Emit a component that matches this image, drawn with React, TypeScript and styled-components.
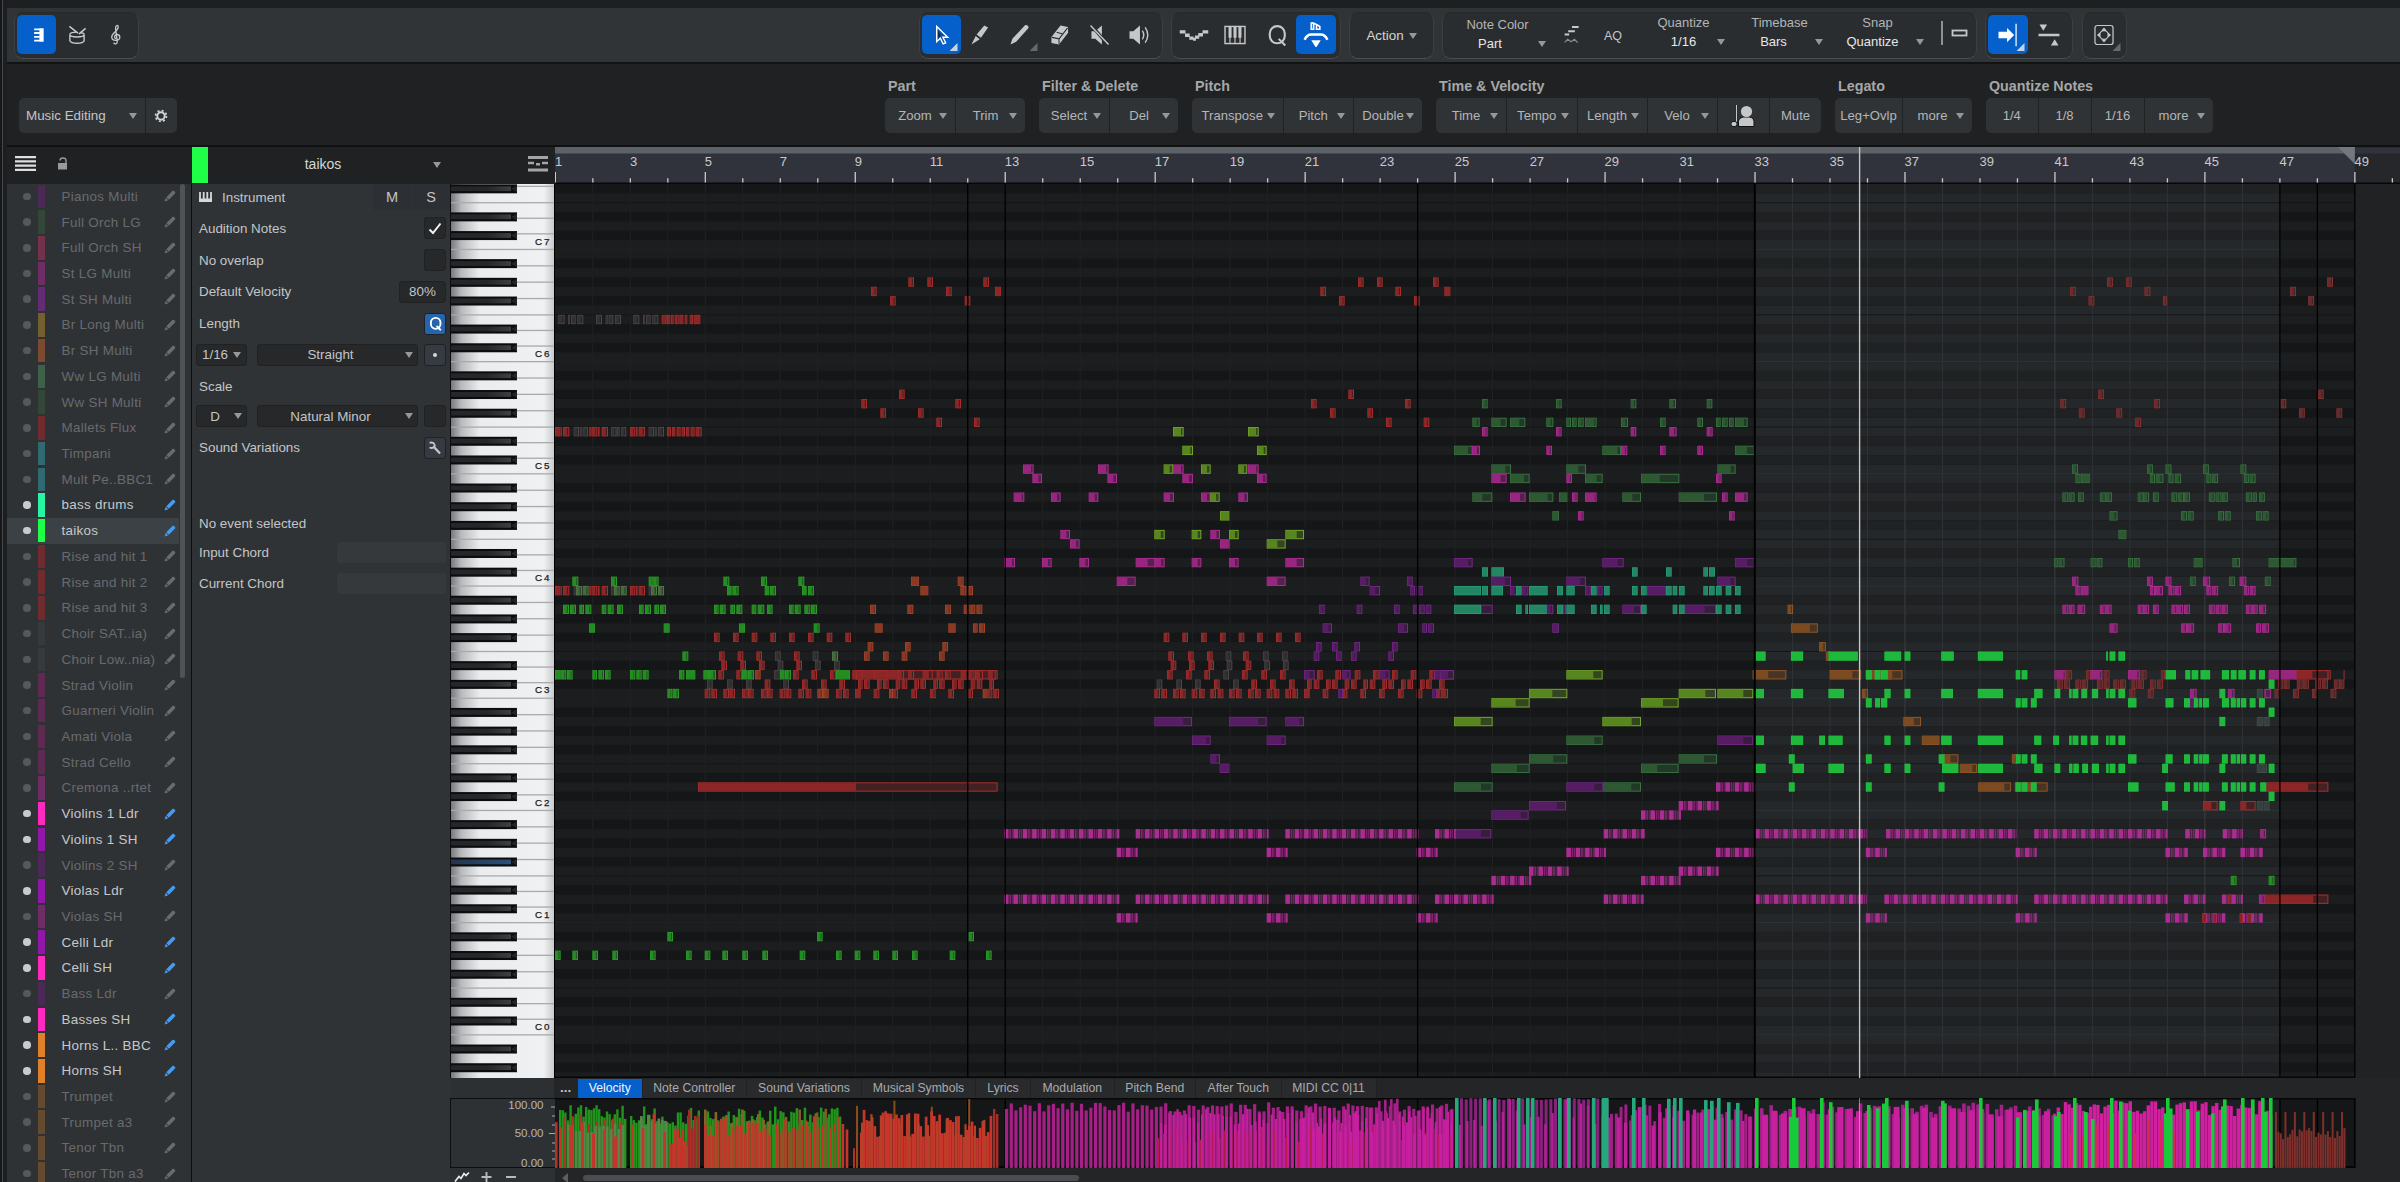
import React from 'react'
import styled, { createGlobalStyle } from 'styled-components'

const BAR = 37.49
const ROW = 9.35
const ROLL_X = 555
const ROLL_TOP = 184
const ROLL_W = 1845
const ROLL_H = 894

type Track = [name: string, color: string, active?: boolean]

const TRACKS: Track[] = [
  ['Pianos Multi', '#4b2856'],
  ['Full Orch LG', '#344638'],
  ['Full Orch SH', '#74314a'],
  ['St LG Multi', '#6f2d65'],
  ['St SH Multi', '#642c75'],
  ['Br Long Multi', '#735f2f'],
  ['Br SH Multi', '#7c4a31'],
  ['Ww LG Multi', '#3f614c'],
  ['Ww SH Multi', '#344638'],
  ['Mallets Flux', '#6f2c2e'],
  ['Timpani', '#2f6a70'],
  ['Mult Pe..BBC1', '#2f6a70'],
  ['bass drums', '#27f5a5', true],
  ['taikos', '#1fff47', true],
  ['Rise and hit 1', '#6f2c2e'],
  ['Rise and hit 2', '#6f2c2e'],
  ['Rise and hit 3', '#6f2c2e'],
  ['Choir SAT..ia)', '#38393b'],
  ['Choir Low..nia)', '#38393b'],
  ['Strad Violin', '#5d2a52'],
  ['Guarneri Violin', '#5d2a52'],
  ['Amati Viola', '#5d2a52'],
  ['Strad Cello', '#5d2a52'],
  ['Cremona ..rtet', '#6f2d65'],
  ['Violins 1 Ldr', '#ff28c0', true],
  ['Violins 1 SH', '#9316ab', true],
  ['Violins 2 SH', '#4b2856'],
  ['Violas Ldr', '#9316ab', true],
  ['Violas SH', '#6f2d65'],
  ['Celli Ldr', '#9316ab', true],
  ['Celli SH', '#ff28c0', true],
  ['Bass Ldr', '#4b2856'],
  ['Basses SH', '#ff28c0', true],
  ['Horns L.. BBC', '#e08028', true],
  ['Horns SH', '#e08028', true],
  ['Trumpet', '#654a2f'],
  ['Trumpet a3', '#654a2f'],
  ['Tenor Tbn', '#654a2f'],
  ['Tenor Tbn a3', '#654a2f'],
]

// fill, border, tail
const NOTE_COLORS: Record<string, [string, string, string]> = {
  green: ['#248d21', '#2c9a2a', '#1e5a1e'],
  moss: ['#45683e', '#4f7a48', '#303f2c'],
  red: ['#8c2627', '#a82e2e', '#432122'],
  dred: ['#6b2b2c', '#853234', '#3d2425'],
  grey: ['#353234', '#4c474a', '#262526'],
  slate: ['#37423f', '#44504c', '#303a38'],
  orange: ['#8b3925', '#a0452a', '#6b2f20'],
  mag: ['#98267f', '#aa2e91', '#57214f'],
  olive: ['#57861f', '#75a82a', '#34461f'],
  wood: ['#2d5832', '#387341', '#233829'],
  purple: ['#561d64', '#762888', '#391c40'],
  teal: ['#238663', '#27a07a', '#238663'],
  lime: ['#1fb83c', '#20c33f', '#1fb83c'],
  brown: ['#7d4b22', '#925828', '#4a3423'],
}

// "x" default note, "x:w" / "x:w:body" explicit length, "a~b" galloping run
type Lane = [pitch: number, color: string, notes: string]

interface Part {
  origin: number
  scale: number
  length: number
  lanes: Lane[]
}

const PARTS: Part[] = [
  {
    origin: 540,
    scale: 3,
    length: 17,
    lanes: [
      [80, 'red', '1105 1162 1330'],
      [79, 'red', '993 1218 1365:18:18'],
      [78, 'red', '1050 1274'],
      [76, 'grey', '55:19 84:6 93:14 112:18 168:18 197:6 206:14 225:18 280:18 309:6 318:14 337:18'],
      [76, 'red', '365:6 373:7 381:10 393:8 404:12 418:12 434:8 449:10 461:20:18'],
      [68, 'red', '1077'],
      [67, 'red', '964 1246'],
      [66, 'red', '1021 1134'],
      [65, 'red', '1189 1302'],
      [64, 'grey', '101:16 119:8 130:14 213:17 231:8 243:16 326:16 344:6 354:18'],
      [64, 'red', '45:16:14 62:4 69:19 148:6 155:17 174:5 185:19 270:16 288:5 296:19 381:12 396:10 410:12 425:10 438:10 452:12 467:18'],
      [48, 'green', '97:18 213:18 326:14 340:16 550:18 663:18 775:18'],
      [48, 'orange', '1113:24:24 1253:18'],
      [47, 'grey', '101:16 213:17 326:16'],
      [47, 'red', '45:16:14 62:4 69:19 148:6 155:17 174:5 185:19 270:16 288:5 296:19'],
      [47, 'moss', '108:18 128:18 222:17 242:18 333:18 354:18'],
      [47, 'green', '561:14:14 577:19 674:14:14 690:18 786:14:14 804:18'],
      [47, 'orange', '1141:24:24 1261:18 1281:18'],
      [45, 'green', '69:18 90:18 118:14 136:18 185:14 203:18 231:18 297:14 315:18 343:14 360:18 522:14 539:18 571:14 589:18 635:14 653:20 681:17 747:14 764:18 793:18 813:18'],
      [45, 'orange', '990:18 1102:18 1215:18 1271:14 1288:18 1309:18'],
      [43, 'green', '147:18:18 371:18:18 597:18:18 821:18'],
      [43, 'orange', '1004:24:24 1225:22:20 1299:14 1317:18'],
      [42, 'red', '522 579 635 691 747 804 860 916'],
      [41, 'orange', '983 1095 1207'],
      [40, 'green', '427:18'],
      [40, 'moss', '876:18'],
      [40, 'red', '537 593 649 762'],
      [40, 'grey', '705 818'],
      [40, 'orange', '972 1029 1085 1197'],
      [39, 'red', '544 601 657 769'],
      [39, 'grey', '713 825 882'],
      [38, 'grey', '702'],
      [38, 'red', '535 589 759 814 870:18 937:436:150'],
      [38, 'orange', '645'],
      [38, 'green', '45:17:17 62:17 81:17 157:14 175:17 195:17 270:16 289:16 308:18 417:16 438:28:27 490:17:17 507:21 606:17:17 624:18 720:14:14 735:18 888:42:40'],
      [38, 'red', '948:20:20 1002:40:40 1075:17 1105:17 1148:30 1190:18 1215:17 1262:26 1288:15 1305:24 1345:22'],
      [37, 'grey', '501 561 618 730'],
      [37, 'red', '674 786 843 898 954:14 972 1011:14 1029 1067:14 1085 1123:14 1141 1180:14 1197 1236:14 1254 1292:14 1310 1348:14'],
      [36, 'green', '382:15 398:19'],
      [36, 'red', '494 514 550 568 606 624 663 681 719 737 775 797 888 909 945:17:17 1001 1057 1114 1170 1225 1282 1340 1360'],
      [36, 'orange', '832 849 1047:12 1328:12'],
      [26, 'red', '474:899:474'],
      [10, 'green', '382 831 1285'],
      [8, 'green', '45 97 157 217 330 438 494 547 607 667 779 888 944 1000 1057 1116 1229 1338'],
    ],
  },
  {
    origin: 1000,
    scale: 3,
    length: 17,
    lanes: [
      [80, 'red', '1074 1131 1299'],
      [79, 'red', '961 1186 1333:18:18'],
      [78, 'red', '1017 1242'],
      [68, 'red', '1045'],
      [67, 'red', '933 1215'],
      [66, 'red', '990 1102'],
      [65, 'red', '1158 1271'],
      [64, 'olive', '519:32:24 744:32:24'],
      [62, 'olive', '547:32:24 771:29:20'],
      [60, 'olive', '491:29 603:29 715:27'],
      [60, 'mag', '69:32:24 294:32:24 519:32:24 744:32:24'],
      [59, 'mag', '97:29 322:29 547:32 771:29'],
      [57, 'mag', '41:32:24 153:29 266:29 491:31 603:29 715:29'],
      [57, 'olive', '631:28'],
      [55, 'olive', '660:28:26'],
      [53, 'olive', '463:31 575:29 687:29 856:56:34'],
      [53, 'mag', '181:29 631:29'],
      [52, 'mag', '210:29 660:29:26'],
      [52, 'olive', '800:57:32'],
      [50, 'mag', '12:33:24 126:29 238:29 407:60:36 463:31:20 575:29 687:29 856:56:34'],
      [48, 'mag', '350:57:32 800:57:32'],
      [48, 'purple', '1081:28 1221'],
      [47, 'purple', '1109:31:17 1231:14 1250:18'],
      [45, 'purple', '957 1070 1182 1239:14 1257 1277'],
      [43, 'purple', '968:28 1194:30 1267:14 1284:18'],
      [42, 'red', '491 547 603 660 716 771 828 885'],
      [41, 'purple', '948 996 1063 1176'],
      [40, 'red', '505 564 621 729'],
      [40, 'grey', '677 789 846'],
      [40, 'purple', '941 1008 1053 1165'],
      [39, 'red', '512 567 625 737'],
      [39, 'grey', '680 793 849'],
      [38, 'red', '501 558 613 726 784 840 951 1006 1064 1119 1176 1232 1288'],
      [38, 'grey', '670'],
      [38, 'purple', '912:32:17 1027:25:15 1137:32:20 1303:59:42'],
      [37, 'grey', '470 529 585 699'],
      [37, 'red', '642 754 810 867 921:14 941 978:14 996 1034:14 1053 1090:14 1109 1147:14 1165 1203:14 1222 1260:14 1278 1317'],
      [36, 'red', '463 484 519 540 575 597 631 653 687 708 744 765 800 821 856 877 912:17:17 968 1025 1081 1137 1194 1250 1310 1327'],
      [36, 'purple', '1015:14 1297:14'],
      [33, 'purple', '463:113:87 687:113:87 856:56:42'],
      [31, 'purple', '576:56:43 800:57:44'],
      [29, 'purple', '631:29'],
      [28, 'purple', '659:29:27'],
      [21, 'mag', '12~358 407~806 856~1256 1305~1362'],
      [19, 'mag', '350~413 800~863 1250~1313'],
      [14, 'mag', '12~358 407~806 856~1256 1305~1362'],
      [12, 'mag', '350~413 800~863 1250~1313'],
    ],
  },
  {
    origin: 1440,
    scale: 3,
    length: 17,
    lanes: [
      [67, 'wood', '126 348 572 688:20 800'],
      [65, 'wood', '97:22 154:46:28 210:46:28 319:21 379:14 396:14 414 435:35:28 543:21 660 772 828:14 846 867:14 885:38:27'],
      [64, 'mag', '126 348 572 688:22 800:18'],
      [62, 'wood', '42:56:42 487:56:46 885:59:36'],
      [62, 'mag', '96:24 319 543:19 660 772'],
      [60, 'wood', '154:59:42 379:59:36 832:55:40'],
      [59, 'mag', '154:46:28 379 828'],
      [59, 'wood', '210:59:42 435:53:35 603:115:56'],
      [57, 'wood', '97:60:30 267:73:56 357:25:23 547:56:30 716:115:76'],
      [57, 'mag', '210:47:30 396 435:35:29 846 885:38:27'],
      [55, 'wood', '337:20:20'],
      [55, 'mag', '414 867'],
      [50, 'purple', '42:56:42 487:64:46 885:59:36'],
      [49, 'teal', '126:18 154:38 576 678 790:14 807:18'],
      [48, 'purple', '154:59:42 379:59:42 832:55:40'],
      [47, 'purple', '210:22 247:18 435 471 621:57:55'],
      [47, 'teal', '42:81 126:18 154:35 228 267:56 351:18 379:25 453 492 576 603 678 698:14 717 790:14 807 828 857 885'],
      [45, 'purple', '123:35:2 319:21 369:9 547:56:35 734:94:60'],
      [45, 'teal', '42:81 228 256:8 267:53 351:18 379:25 453 480:8 492 603 698:14 717 828 857 885'],
      [43, 'purple', '337:20:20'],
      [38, 'olive', '379:109:81'],
      [38, 'purple', '0:42:24'],
      [36, 'olive', '267:115:70 716:112:80 832:108:78'],
      [35, 'olive', '154:115:73 603:113:66'],
      [33, 'olive', '42:116:80 487:116:88'],
      [31, 'wood', '379:109:84'],
      [31, 'purple', '832:108:78'],
      [29, 'wood', '267:115:73 716:115:76'],
      [28, 'wood', '154:115:77 603:113:49'],
      [26, 'wood', '42:116:81 490:113:84'],
      [26, 'purple', '379:111:84'],
      [26, 'mag', '828~948'],
      [24, 'purple', '267:111:84'],
      [24, 'mag', '716~836'],
      [23, 'purple', '154:112:88'],
      [23, 'mag', '603~723'],
      [21, 'purple', '42:112:81'],
      [21, 'mag', '42:6 491~614'],
      [19, 'mag', '379~498 828~948'],
      [17, 'mag', '267~386 716~836'],
      [16, 'mag', '154~274 603~722'],
      [14, 'mag', '42~161 491~611'],
    ],
  },
  {
    origin: 1740,
    scale: 2.376,
    length: 14,
    lanes: [
      [80, 'dred', '872 917 1395'],
      [79, 'dred', '784 961 1307'],
      [78, 'dred', '828 1005:9 1350'],
      [68, 'dred', '851 1373'],
      [67, 'dred', '761 984 1284'],
      [66, 'dred', '805 894 1328 1417'],
      [65, 'dred', '939'],
      [60, 'wood', '789 967 1011 1100 1189'],
      [59, 'wood', '797:12 810:21:19 974:12 988:18 1018:12 1033:15 1108:12 1122 1197:12 1211'],
      [57, 'wood', '766 781 803 855 869:15 945 958 981 1025 1041 1055 1114 1130 1145 1202 1218:10 1233'],
      [55, 'wood', '878:19 1048 1064 1136 1152 1226 1242'],
      [53, 'wood', '899:19:19'],
      [50, 'wood', '746:9 757 833:12 847 922:12 936 1078:21:21 1170:18 1256:66:60'],
      [48, 'wood', '1069 1162 1247'],
      [48, 'mag', '789:15 967 1011 1100:17 1187:16'],
      [47, 'mag', '797:12 810:18:17 974:12 986:19 1018 1033:15 1108:12 1122 1197:12 1211'],
      [45, 'mag', '766 781 802:18 855 869 945 958 981 1025 1039 1055 1114 1130 1145 1202 1216 1233:17'],
      [45, 'brown', '113:13'],
      [43, 'mag', '878:19 1048 1062:17 1136 1150:17 1226:12 1240:17'],
      [43, 'brown', '121:64:45'],
      [41, 'brown', '188:16'],
      [40, 'brown', '204:10'],
      [40, 'lime', '36:25 121:29 210:70 343:40 391 478:30 565:60 870:4 878 899:16'],
      [38, 'brown', '30:80:37 213:75:54 299:60:60 350:36:12'],
      [38, 'lime', '299 320 335:16 655:11 669 1011:25 1058:12 1073:16 1094:6 1100:17 1145:17 1166 1184:8 1191:11 1211 1233'],
      [38, 'dred', '775 822:12 864 952 1000:10 1390 1434:3'],
      [38, 'mag', '747:27:22 833:28:22 922:28:22'],
      [38, 'red', '1320:78:40'],
      [38, 'mag', '1256:66:66'],
      [37, 'dred', '753 770 797 813 848 864 887 903 930 946 974 991 1279:12 1292 1323 1338 1367 1383 1411 1424:12'],
      [37, 'lime', '1256'],
      [36, 'dred', '925 969 1270 1314 1359 1403'],
      [36, 'slate', '1228'],
      [36, 'mag', '1069:16 1159:16 1246:16:4'],
      [36, 'brown', '290:14'],
      [36, 'lime', '36:21 121:29 210:37 343:15 391 478:28 565:60 699:20 747 782:6 790 811 836:15 870:6 878 899:16 1139'],
      [35, 'purple', '1069'],
      [35, 'lime', '299 321:12 335:15 655:12 669 691 922:20 1011:19 1055 1078:11 1091:7 1100 1145:17 1166:12 1180:8 1190:13 1211 1233'],
      [34, 'lime', '1256'],
      [33, 'brown', '388:42:25'],
      [33, 'lime', '1139'],
      [33, 'slate', '1228 1244'],
      [31, 'brown', '432:42:40'],
      [31, 'lime', '36:21 121:29 188 210:34 343:15 391 478:25 565:60 699:17 744 782:6 790 810:15 833:18 870:6 878 899:16'],
      [29, 'brown', '480:39:20 646:12'],
      [29, 'lime', '116 299 472 655:12 669 691 922:20 1011:17 1055 1078:11 1091:8 1100 1145 1166:12 1180:8 1190:13 1211 1233'],
      [28, 'brown', '522:41:30'],
      [28, 'slate', '1228 1240:12'],
      [28, 'lime', '36:25 125:27 210:37 343:15 391 480:39 565:60 699:20 747 782:8 792:13 813 836:17 870:6 878 899:16 1003 1139 1256'],
      [26, 'brown', '566:78:62 653:78:50'],
      [26, 'lime', '116 299 472 655:12 669 691 922:25 1011:22 1055 1078:11 1091:8 1100 1145 1166:12 1180:8 1190:13 1211 1236:15'],
      [26, 'red', '1251:147:99'],
      [25, 'lime', '1256'],
      [24, 'red', '1100:35:20 1189:36:14'],
      [24, 'lime', '1003 1139'],
      [24, 'slate', '1228 1244'],
      [21, 'mag', '36~303 347~660 699~1016 1058~1106 1147~1195 1236'],
      [19, 'mag', '299~349 655~705 1011~1064 1100~1153 1189~1242'],
      [16, 'green', '1166 1256'],
      [14, 'mag', '36~303 343~660 699~1016 1055~1106 1145~1195 1233'],
      [14, 'red', '1247:151:115 1160:8'],
      [12, 'mag', '299~349 655~705 1011~1064 1100~1153 1189~1242'],
      [12, 'red', '1098:10 1124:8 1187:8 1205:10'],
    ],
  },
]

const barX = (bar: number) => (bar - 1) * BAR + 0.3
const pitchY = (pitch: number) => 1030.1 - ROW * pitch - ROW / 2 - ROLL_TOP
const isBlack = (pitch: number) => [1, 3, 6, 8, 10].includes(((pitch % 12) + 12) % 12)
const noise = (n: number) => {
  const v = Math.sin(n * 127.1 + 11.7) * 43758.5453
  return v - Math.floor(v)
}

const PITCHES = Array.from({ length: 96 }, (_, i) => i - 5)

// one long hit followed by two short ones, four times a bar
const GALLOP = [
  [0, 4.6, 1],
  [5.3, 1.8, 0.8],
  [7.7, 1.1, 0.7],
]

const Note = ({ x, y, w, body, color }: { x: number; y: number; w: number; body: number; color: string }) => {
  const [fill, edge, tail] = NOTE_COLORS[color]
  return (
    <>
      <rect x={x} y={y} width={w} height={ROW} fill={edge} />
      <rect x={x + 1} y={y + 1} width={Math.max(w - 2, 0.3)} height={ROW - 2} fill={tail} />
      <rect x={x + 0.6} y={y + 0.8} width={Math.max(Math.min(body, w - 0.6) - 0.6, 0.5)} height={ROW - 1.6} fill={fill} />
    </>
  )
}

const renderLane = (part: Part, [pitch, color, notes]: Lane, key: string) => {
  const y = pitchY(pitch)
  const toX = (v: number) => part.origin + v / part.scale - ROLL_X
  const solid = color === 'lime' || color === 'teal'

  return notes.split(' ').flatMap((token, i) => {
    if (token.includes('~')) {
      const [a, b] = token.split('~').map(v => toX(Number(v)))
      const [fill, edge] = NOTE_COLORS[color]
      const out: React.ReactNode[] = []
      for (let x = a, n = 0; x < b - 1; x += BAR / 4, n++) {
        GALLOP.forEach(([dx, w, opacity], h) => {
          const left = x + dx
          if (left < b - 0.8) {
            out.push(
              <rect
                key={`${key}-${i}-${n}-${h}`}
                x={left}
                y={y}
                width={Math.min(w, b - left)}
                height={ROW}
                fill={h ? fill : edge}
                opacity={opacity}
              />
            )
          }
        })
      }
      return out
    }
    const [x, w = part.length, body] = token.split(':').map(Number)
    const width = w / part.scale
    const solidPart = body !== undefined ? body / part.scale : solid ? width : width * 0.62
    return [<Note key={`${key}-${i}`} x={toX(x)} y={y} w={width} body={solidPart} color={color} />]
  })
}

const NoteGrid = () => {
  const regionX = barX(33)
  const regionW = barX(47) - regionX
  const end = barX(49)
  return (
    <svg width={ROLL_W} height={ROLL_H} style={{ display: 'block' }}>
      <rect width={end} height={ROLL_H} fill="#1b1d1e" />
      <rect x={regionX} width={regionW} height={ROLL_H} fill="#24282b" />
      {PITCHES.filter(isBlack).map(p => (
        <g key={p}>
          <rect y={pitchY(p)} width={end} height={ROW} fill="#151617" />
          <rect x={regionX} y={pitchY(p)} width={regionW} height={ROW} fill="#202123" />
        </g>
      ))}
      {PITCHES.filter(p => p % 12 === 0).map(p => (
        <g key={p}>
          <rect y={pitchY(p) + ROW - 0.5} width={end} height={1} fill="#202224" />
          <rect x={regionX} y={pitchY(p) + ROW - 0.5} width={regionW} height={1} fill="#303336" />
          <rect y={pitchY(p + 4) - 0.5} width={end} height={1} fill="#151617" />
        </g>
      ))}
      {Array.from({ length: 47 }, (_, i) => i + 2).map(bar => {
        const inside = bar > 33 && bar < 47
        return (
          <rect
            key={bar}
            x={barX(bar) - 0.5}
            width={1}
            height={ROLL_H}
            fill={inside ? (bar % 4 === 1 ? '#3b3e41' : '#303336') : '#202224'}
          />
        )
      })}
      {PARTS.map((part, p) => part.lanes.map((lane, l) => renderLane(part, lane, `${p}-${l}`)))}
      {[12, 13, 24, 47, 48, 49].map(bar => (
        <rect key={bar} x={barX(bar) - 0.6} width={1.3} height={ROLL_H} fill="#000" />
      ))}
      <rect x={regionX - 1.2} width={2} height={ROLL_H} fill="#000" />
      <rect x={end + 1} width={ROLL_W - end} height={ROLL_H} fill="#202223" />
      <rect y={ROLL_H - 1.5} width={end} height={1.5} fill="#060606" />
      <rect x={1303.9} width={1.4} height={ROLL_H} fill="#c4c5c6" />
    </svg>
  )
}

interface Burst {
  from: number
  to: number
  step: number
  width: number
  low: number
  high: number
  color: string
}

const BURSTS: Burst[] = [
  { from: 559, to: 625, step: 2.6, width: 2.4, low: 66, high: 90, color: '#22931d' },
  { from: 555, to: 625, step: 8.1, width: 2.6, low: 58, high: 82, color: '#b03327' },
  { from: 567, to: 625, step: 3.9, width: 2.6, low: 50, high: 72, color: '#58864a' },
  { from: 559, to: 625, step: 11, width: 3, low: 40, high: 66, color: '#c5352b' },
  { from: 630, to: 700, step: 2.6, width: 2.4, low: 60, high: 88, color: '#22931d' },
  { from: 640, to: 668, step: 3.5, width: 2.8, low: 58, high: 80, color: '#58864a' },
  { from: 631, to: 664, step: 10.8, width: 2.6, low: 50, high: 82, color: '#c5352b' },
  { from: 669, to: 690, step: 2.5, width: 2.5, low: 30, high: 62, color: '#c5352b' },
  { from: 688, to: 700, step: 3, width: 2.6, low: 56, high: 94, color: '#9e2b28' },
  { from: 704, to: 774, step: 2.6, width: 2.5, low: 62, high: 86, color: '#22931d' },
  { from: 704, to: 771, step: 5.3, width: 2.6, low: 56, high: 84, color: '#886326' },
  { from: 704, to: 771, step: 4, width: 2.6, low: 45, high: 72, color: '#c5352b' },
  { from: 774, to: 840, step: 2.7, width: 2.5, low: 62, high: 88, color: '#22931d' },
  { from: 776, to: 848, step: 4.1, width: 2.6, low: 48, high: 74, color: '#c5352b' },
  { from: 781, to: 840, step: 8.7, width: 2.6, low: 45, high: 86, color: '#7f5b26' },
  { from: 856, to: 990, step: 37.4, width: 2, low: 84, high: 100, color: '#8d4a1c' },
  { from: 860, to: 990, step: 2.7, width: 2.7, low: 42, high: 84, color: '#c8362b' },
  { from: 861, to: 990, step: 9.4, width: 2.2, low: 60, high: 84, color: '#b04427' },
  { from: 853, to: 857, step: 4, width: 2, low: 24, high: 30, color: '#b52f29' },
  { from: 993, to: 999, step: 3, width: 2.4, low: 46, high: 92, color: '#a52c29' },
  { from: 1005, to: 1452, step: 4.68, width: 3.2, low: 80, high: 94, color: '#a51f86' },
  { from: 1157, to: 1452, step: 6.1, width: 2.4, low: 36, high: 62, color: '#b51d4e' },
  { from: 1160, to: 1452, step: 4.1, width: 2.3, low: 60, high: 88, color: '#c31f9c' },
  { from: 1302, to: 1452, step: 5.3, width: 2.4, low: 46, high: 84, color: '#c81fa2' },
  { from: 1378, to: 1400, step: 6, width: 2.6, low: 92, high: 99, color: '#a51f86' },
  { from: 1460, to: 1610, step: 4.7, width: 3, low: 97, high: 100, color: '#86227a' },
  { from: 1459, to: 1610, step: 7.1, width: 2.4, low: 60, high: 99, color: '#b5209a' },
  { from: 1610, to: 1754, step: 4.8, width: 3, low: 66, high: 92, color: '#a01f85' },
  { from: 1617, to: 1754, step: 6.9, width: 3.3, low: 60, high: 88, color: '#bf209c' },
  { from: 1760, to: 2052, step: 4.7, width: 3.6, low: 72, high: 94, color: '#a02187' },
  { from: 1762, to: 2052, step: 9.4, width: 6, low: 72, high: 88, color: '#c81f9e' },
  { from: 2053, to: 2270, step: 3.6, width: 3.4, low: 74, high: 97, color: '#d01f9f' },
  { from: 2056, to: 2180, step: 13, width: 2.2, low: 42, high: 70, color: '#d92757' },
]

// single hits as "x:level"
const TEAL_HITS =
  '1455:100 1483:100 1493:100 1517:100 1526:100 1531:100 1558:100 1567:100 1592:100 1602:100 1605:100 1632:100 1642:100 1667:99 1673:100 1679:100 1704:97 1710:96 1717:100 1727:94 1736:93'
const GREEN_HITS =
  '1755:100 1789:73 1792:100 1795:72 1820:100 1829:94 1867:90 1876:85 1882:92 1885:100 1905:96 1941:96 1943:92 1979:100 2016:72 2023:83 2032:82 2035:98 2054:74 2057:80 2073:100 2084:80 2091:70 2110:100 2119:95 2128:82 2164:78 2166:100 2169:85 2186:84 2196:80 2211:78 2221:88 2223:98 2241:100 2251:98 2261:100 2264:80 2269:100'

const VelocityBars = () => {
  const h = 70
  const hits = (list: string, color: string) =>
    list.split(' ').map(hit => {
      const [x, level] = hit.split(':').map(Number)
      const v = (level / 100) * h
      return <rect key={hit} x={x - ROLL_X} y={h - v} width={3.6} height={v} fill={color} />
    })

  return (
    <svg width={ROLL_W} height={h} style={{ display: 'block' }}>
      <rect width={barX(49)} height={h} fill="#151617" />
      <rect x={barX(33)} width={barX(47) - barX(33)} height={h} fill="#1d2022" />
      {[12, 13, 24, 33, 47, 48, 49].map(b => (
        <rect key={b} x={barX(b) - 0.6} width={1.4} height={h} fill="#000" />
      ))}
      <rect width={barX(49)} height={1.5} fill="#070707" />
      <rect y={h - 2} width={barX(49)} height={2} fill="#050505" />
      {BURSTS.map((b, k) => {
        const bars: React.ReactNode[] = []
        for (let x = b.from, i = 0; x < b.to; x += b.step, i++) {
          const v = ((b.low + (b.high - b.low) * noise(k * 31 + i)) / 100) * h
          bars.push(<rect key={i} x={x - ROLL_X} y={h - v} width={b.width} height={v} fill={b.color} />)
        }
        return <g key={k}>{bars}</g>
      })}
      {hits(TEAL_HITS, '#27a77c')}
      {hits(GREEN_HITS, '#18ca39')}
      {Array.from({ length: 30 }, (_, i) => {
        const v = i % 4 === 0 ? 56 : 28 + noise(i) * 12
        return <rect key={i} x={2275 + i * 2.36 - ROLL_X} y={h - v} width={2} height={v} fill="#80302c" />
      })}
      <rect x={1304} width={1} height={h} fill="#c4c5c6" opacity={0.6} />
    </svg>
  )
}

const PianoKeys = () => (
  <svg width={104} height={894} style={{ display: 'block' }}>
    <defs>
      <linearGradient id="ivory">
        <stop offset="0" stopColor="#77797c" />
        <stop offset="0.1" stopColor="#b9babd" />
        <stop offset="0.28" stopColor="#ebecee" />
        <stop offset="0.9" stopColor="#f0f1f2" />
        <stop offset="1" stopColor="#c9cacc" />
      </linearGradient>
      <linearGradient id="ebony">
        <stop offset="0" stopColor="#23272a" />
        <stop offset="0.6" stopColor="#24282b" />
        <stop offset="1" stopColor="#3c4043" />
      </linearGradient>
      <linearGradient id="pressed">
        <stop offset="0" stopColor="#23344b" />
        <stop offset="1" stopColor="#2c5078" />
      </linearGradient>
    </defs>
    <rect width={103} height={894} fill="url(#ivory)" />
    {Array.from({ length: 9 }, (_, oct) => {
      const bottom = 1034.8 - oct * 112.2 - ROLL_TOP
      return (
        <g key={oct}>
          {[0, 15.6, 31.2, 46.75, 63.1, 79.5, 95.8].map(d => (
            <rect key={d} y={bottom - d - 0.6} width={103} height={1.3} fill="#a9aaac" />
          ))}
        </g>
      )
    })}
    {PITCHES.filter(isBlack).map(p => {
      const y = pitchY(p) + 0.4
      return (
        <g key={p}>
          <rect y={y} width={66} height={9} fill="#0b0c0d" />
          <rect y={y + 2} width={60} height={4.8} fill={p === 18 ? 'url(#pressed)' : 'url(#ebony)'} />
          <path d={`M60 ${y + 4.5} L66 ${y + 1} V${y + 8}z`} fill="#222528" />
        </g>
      )
    })}
    {[0, 1, 2, 3, 4, 5, 6, 7].map(o => (
      <text key={o} x={98.5} y={1030 - o * 112.2 - ROLL_TOP} textAnchor="end" fontSize="9.8" fontFamily="Liberation Sans" fill="#1c1d1f" stroke="#1c1d1f" strokeWidth={0.25} wordSpacing={-0.8}>
        C {o}
      </text>
    ))}
    <rect x={103} width={1} height={894} fill="#000" />
  </svg>
)

const Ruler = () => {
  const end = barX(49)
  return (
    <svg width={ROLL_W} height={37} style={{ display: 'block' }}>
      <rect width={ROLL_W} height={37} fill="#25272a" />
      <rect y={0.5} x={end} width={ROLL_W - end} height={6} fill="#30333b" />
      <rect width={end} height={36} fill="#30333b" />
      <rect width={end} height={6.5} fill="#5d6168" />
      <path d={`M${end - 17} 0H${end}V17z`} fill="#74777d" />
      <rect y={35.5} width={ROLL_W} height={1.5} fill="#060708" />
      {Array.from({ length: 50 }, (_, i) => i + 1).map(bar => {
        const major = bar % 4 === 1
        return (
          <g key={bar}>
            <rect x={barX(bar) - 0.6} y={major ? 25 : 31.2} width={1.3} height={major ? 10.5 : 4.3} fill="#c9cacc" />
            {bar % 2 === 1 && (
              <text x={barX(bar) - 0.4} y={19.2} fontSize="13" fontFamily="Liberation Sans" fill="#c9cacc">
                {bar}
              </text>
            )}
          </g>
        )
      })}
      <rect x={1303.9} width={1.4} height={37} fill="#c4c5c6" />
    </svg>
  )
}

/* icons */

const Svg = ({ w = 24, h = 24, children }: { w?: number; h?: number; children: React.ReactNode }) => (
  <svg width={w} height={h} viewBox={`0 0 ${w} ${h}`} fill="none" stroke="none">
    {children}
  </svg>
)

const C = '#c6c7c8'

const PencilIcon = ({ color }: { color: string }) => (
  <svg width="12" height="12" viewBox="0 0 12 12" fill={color}>
    <path d="M0.5 11.5l1.300-3.800 2.500 2.500zM2.300 7.200L8.400 1c1.300-1.100 3.700 1.100 2.600 2.500L4.900 9.700z" />
  </svg>
)

const PianoRollIcon = () => (
  <Svg>
    <path d="M14.500 5h4.500v14h-4.500z" fill="#fff" />
    <path d="M9 6h6M9 9.900h6M9 13.900h6M9 17.900h6" stroke="#fff" strokeWidth="1.900" />
  </Svg>
)

const DrumIcon = () => (
  <Svg>
    <path d="M4 3l9 7M21 5l-7 6" stroke={C} strokeWidth="1.600" />
    <path d="M4.500 11.500q0-2.500 7-2.500M15.500 9.300q4 .5 4 2.200" stroke={C} strokeWidth="1.500" />
    <path d="M4.500 11.500c0 3.400 15 3.400 15 0v6.500c-1.500 3.600-13.500 3.600-15 0z" stroke={C} strokeWidth="1.500" />
  </Svg>
)

const ClefIcon = () => (
  <Svg>
    <path d="M9.500 20c1 2 4 1.800 3.800-1L11.500 5c0-3 2.600-4.500 2.800-1.500 0 4.500-6.800 6-6.800 10.500 0 4.800 8.500 4.800 8.500.5 0-3.800-5.500-4-5.500-.5 0 1 .6 1.600 1.500 1.900" stroke={C} strokeWidth="1.400" />
  </Svg>
)

const ArrowIcon = () => (
  <Svg>
    <path d="M7.500 3v16l3.800-3.600 2.900 6 2.700-1.200-2.900-5.800h5z" fill="#0b4fa6" stroke="#fff" strokeWidth="1.500" />
    <path d="M9 7v8l2.500-2.500z" fill="#10243c" />
  </Svg>
)

const PaintIcon = () => (
  <Svg>
    <path d="M3 22l4.500-9 4.200 3.400zM8.500 11.500L16.500 2l4 2-7.500 11z" fill={C} />
  </Svg>
)

const PenIcon = () => (
  <Svg>
    <path d="M2 22l2-6L17 2c2-1.500 5 .8 3.700 3L8 19z" fill={C} />
  </Svg>
)

const EraserIcon = () => (
  <Svg>
    <path d="M3 14L12.500 2l8 1.500v6L11 22l-8-1.500z" fill={C} />
    <path d="M3.500 14.500l7.500 1.500L20 4.500M11 16v5.500M8.500 9l6.500 2" stroke="#2a2d2f" strokeWidth="1.100" />
  </Svg>
)

const MuteIcon = () => (
  <Svg>
    <path d="M3 8h4l7-6v20l-7-6H3z" fill={C} />
    <path d="M3 2l18 21" stroke="#2a2d2f" strokeWidth="3.500" />
    <path d="M2 2l19 20" stroke={C} strokeWidth="1.500" />
  </Svg>
)

const SpeakerIcon = () => (
  <Svg>
    <path d="M2 8h4l7-6v20l-7-6H2z" fill={C} />
    <path d="M15.500 7.500q3 4.500 0 9M18.500 4q5.500 8 0 16" stroke={C} strokeWidth="1.500" />
  </Svg>
)

const StepsIcon = () => (
  <Svg w={32}>
    <path d="M1 7h6v3.500H1zM6.500 10.500h5V14h-5zM11 13.500h4.500v3.500H11zM15 15h3v3h-3zM17 12.500h4.500V16H17zM20.500 10h5v3.500h-5zM25 7h6v3.500h-6z" fill={C} />
  </Svg>
)

const KeysIcon = () => (
  <Svg>
    <rect x="1.500" y="3" width="21" height="18" stroke={C} strokeWidth="1.500" />
    <path d="M6.700 13v8M12 13v8M17.300 13v8" stroke={C} strokeWidth="1.200" />
    <path d="M5.200 3h3.200v12H5.200zM10.400 3h3.200v12h-3.200zM15.600 3h3.200v12h-3.200z" fill={C} />
  </Svg>
)

const QIcon = ({ size = 24, color = C, weight = 2.2 }: { size?: number; color?: string; weight?: number }) => (
  <svg width={size} height={size} viewBox="0 0 24 24" fill="none" stroke={color} strokeWidth={weight}>
    <rect x="5.500" y="4" width="13.500" height="15.500" rx="6.700" />
    <path d="M13.500 15.500l6 6" />
  </svg>
)

const MagnetIcon = () => (
  <Svg w={28} h={32}>
    <path d="M9 3.500h2.500V10H9zM11.500 3.500l3 1.500 3.500 2v3h-3.500V6" stroke="#fff" strokeWidth="1.700" />
    <path d="M2 21q2.500-5.500 7-5.500h10q4.500 0 7 5.500" stroke="#fff" strokeWidth="2.600" />
    <path d="M9 21.500h10l-4.500 7h-1z" fill="#fff" />
  </Svg>
)

const BendIcon = () => (
  <Svg w={16}>
    <path d="M8 3.500h7M4 8h7M0 11.500h5" stroke={C} strokeWidth="2.100" />
    <path d="M0 20l3.500-3.500L7 19l3.500-2.500L14 20" stroke="#888b8d" strokeWidth="1.300" />
  </Svg>
)

const ScrollIcon = () => (
  <Svg>
    <path d="M2 8.500h9V4.500l7.500 7.500-7.500 7.500v-4H2z" fill="#fff" />
    <path d="M20.500 0v24" stroke="#fff" strokeWidth="1.300" />
  </Svg>
)

const SplitIcon = () => (
  <Svg h={26}>
    <path d="M2 2h8l-4 6.500zM14 24h8l-4-6.500z" fill={C} />
    <path d="M1 13h22" stroke={C} strokeWidth="2.400" />
  </Svg>
)

const FrameIcon = () => (
  <Svg>
    <rect x="2.500" y="2" width="19" height="20" rx="2.500" stroke={C} strokeWidth="1.300" />
    <path d="M12 4l3 3.500H9zM12 20l3-3.500H9zM4.500 12L8 9v6zM19.500 12L16 9v6z" fill={C} />
    <circle cx="12" cy="12" r="4.500" stroke={C} strokeWidth="1.200" />
  </Svg>
)

const GearIcon = () => (
  <svg width="14" height="14" viewBox="0 0 14 14" fill="none" stroke="#d2d3d4">
    <circle cx="7" cy="7" r="3.700" strokeWidth="2" />
    <circle cx="7" cy="7" r="5.400" strokeWidth="1.800" strokeDasharray="2 2.240" />
  </svg>
)

const HumanizeIcon = () => (
  <Svg w={26} h={28}>
    <path d="M7.500 3v18" stroke="#060606" strokeWidth="3" />
    <path d="M7.500 3v18" stroke={C} strokeWidth="1.400" />
    <ellipse cx="5" cy="22" rx="3.200" ry="2.700" fill={C} stroke="#101112" />
    <path d="M9.500 24.500v-5q0-3.500 5-4.500h6q4.500 1 4.500 4.500v5z" fill={C} stroke="#101112" />
    <circle cx="17.500" cy="9.500" r="5.600" fill={C} />
  </Svg>
)

/* pieces */

const ToolButton = ({ width = 40, active, corner, children }: { width?: number; active?: boolean; corner?: boolean; children: React.ReactNode }) => (
  <Tool $width={width} $active={active}>
    {children}
    {corner && <Corner $active={active} />}
  </Tool>
)

interface FieldProps {
  label: string
  value: string
  width: number
  before: number
  pull?: number
  drop?: number
}

const ValueField = ({ label, value, width, before, pull = 0, drop = 0 }: FieldProps) => (
  <Field $width={width} $before={before} $drop={drop}>
    <FieldLabel>{label}</FieldLabel>
    <FieldValue $pull={pull}>
      {value}
      <FieldArrow>
        <Caret />
      </FieldArrow>
    </FieldValue>
  </Field>
)

interface MacroItem {
  label?: string
  width: number
  menu?: boolean
  icon?: React.ReactNode
}

const MACROS: { title: string; items: MacroItem[] }[] = [
  { title: 'Part', items: [{ label: 'Zoom', width: 70, menu: true }, { label: 'Trim', width: 70, menu: true }] },
  { title: 'Filter & Delete', items: [{ label: 'Select', width: 70, menu: true }, { label: 'Del', width: 69, menu: true }] },
  {
    title: 'Pitch',
    items: [
      { label: 'Transpose', width: 90.5, menu: true },
      { label: 'Pitch', width: 70.5, menu: true },
      { label: 'Double', width: 69, menu: true },
    ],
  },
  {
    title: 'Time & Velocity',
    items: [
      { label: 'Time', width: 70, menu: true },
      { label: 'Tempo', width: 70.5, menu: true },
      { label: 'Length', width: 70, menu: true },
      { label: 'Velo', width: 70, menu: true },
      { width: 52.5, icon: <HumanizeIcon /> },
      { label: 'Mute', width: 52 },
    ],
  },
  { title: 'Legato', items: [{ label: 'Leg+Ovlp', width: 67 }, { label: 'more', width: 70, menu: true }] },
  {
    title: 'Quantize Notes',
    items: [
      { label: '1/4', width: 51.5 },
      { label: '1/8', width: 53 },
      { label: '1/16', width: 53 },
      { label: 'more', width: 69, menu: true },
    ],
  },
]

const TABS: [string, number][] = [
  ['Velocity', 64.5],
  ['Note Controller', 104.5],
  ['Sound Variations', 115],
  ['Musical Symbols', 114],
  ['Lyrics', 55],
  ['Modulation', 83.5],
  ['Pitch Bend', 81.5],
  ['After Touch', 85.5],
  ['MIDI CC 0|11', 95],
]

const App = () => (
  <Window>
    <GlobalStyle />
    <Gutter />
    <Main>
      <TopStrip />
      <Toolbar>
        <Group $width={125}>
          <ToolButton active width={39}><PianoRollIcon /></ToolButton>
          <ToolButton width={41}><DrumIcon /></ToolButton>
          <ToolButton width={38}><ClefIcon /></ToolButton>
        </Group>
        <Gap $width={780} />
        <Group $width={244}>
          <ToolButton active corner width={38.5}><ArrowIcon /></ToolButton>
          <ToolButton width={39}><PaintIcon /></ToolButton>
          <ToolButton corner width={41}><PenIcon /></ToolButton>
          <ToolButton width={39}><EraserIcon /></ToolButton>
          <ToolButton><MuteIcon /></ToolButton>
          <ToolButton width={38}><SpeakerIcon /></ToolButton>
        </Group>
        <Gap $width={8} />
        <Group $width={170}>
          <ToolButton width={39}><StepsIcon /></ToolButton>
          <ToolButton width={44}><KeysIcon /></ToolButton>
          <ToolButton width={39}><QIcon size={28} weight={1.900} /></ToolButton>
          <ToolButton active><MagnetIcon /></ToolButton>
        </Group>
        <Gap $width={8} />
        <Group $width={85}>
          <ActionLabel>
            Action <Caret />
          </ActionLabel>
        </Group>
        <Gap $width={8} />
        <Group $width={535}>
          <ValueField label="Note Color" value="Part" width={96} before={4.5} pull={15} drop={2} />
          <ToolButton width={52}><BendIcon /></ToolButton>
          <SmallLabel>AQ</SmallLabel>
          <ValueField label="Quantize" value="1/16" width={82} before={14} />
          <ValueField label="Timebase" value="Bars" width={87} before={11.5} pull={12} />
          <ValueField label="Snap" value="Quantize" width={93} before={8} pull={10} />
          <LengthMark>
            <Svg w={28}>
              <path d="M1 0v24" stroke={C} strokeWidth="1.300" />
              <rect x="11.500" y="9.500" width="14" height="5" stroke={C} strokeWidth="1.800" />
            </Svg>
          </LengthMark>
        </Group>
        <Gap $width={8} />
        <Group $width={88}>
          <ToolButton active corner width={39.5}><ScrollIcon /></ToolButton>
          <ToolButton width={43}><SplitIcon /></ToolButton>
        </Group>
        <Gap $width={8.5} />
        <Group $width={45}>
          <ToolButton corner width={39}><FrameIcon /></ToolButton>
        </Group>
      </Toolbar>

      <MacroBar>
        <ButtonRow>
          <MacroButton $width={126}>
            <PresetName>Music Editing</PresetName>
            <Caret />
          </MacroButton>
          <MacroButton $width={32}><GearIcon /></MacroButton>
        </ButtonRow>
        <Macros>
          {MACROS.map(group => (
            <div key={group.title}>
              <MacroTitle>{group.title}</MacroTitle>
              <ButtonRow>
                {group.items.map((item, i) => (
                  <MacroButton key={i} $width={item.width}>
                    {item.icon}
                    <MacroText>{item.label}</MacroText>
                    {item.menu && <Caret />}
                  </MacroButton>
                ))}
              </ButtonRow>
            </div>
          ))}
        </Macros>
      </MacroBar>

      <HeaderRow>
        <ListHeader>
          <Svg w={21} h={15}>
            <path d="M0 1.200h21M0 5.400h21M0 9.600h21M0 13.800h21" stroke="#dedfe0" strokeWidth="2.300" />
          </Svg>
          <Svg w={10} h={13}>
            <path d="M0 6h9v6.500H0z" fill="#98999a" />
            <path d="M8 6V3.500Q8 1 5 1T2 3.500" stroke="#98999a" strokeWidth="1.400" />
          </Svg>
        </ListHeader>
        <TrackColor />
        <TrackTitle>taikos</TrackTitle>
        <TitleCaret>
          <Caret />
        </TitleCaret>
        <ArrangeIcon>
          <Svg w={20} h={16}>
            <path d="M0 1.500h20M0 14h20" stroke="#a4a5a6" strokeWidth="3" />
            <path d="M0 7h6M8 8.200h4M14 7h6" stroke="#a4a5a6" strokeWidth="2.400" />
          </Svg>
        </ArrangeIcon>
        <Ruler />
      </HeaderRow>

      <Body>
        <TrackList>
          {TRACKS.map(([name, color, active]) => (
            <TrackRow key={name} $selected={name === 'taikos'}>
              <Dot $active={active} />
              <Swatch $color={color} />
              <TrackName $active={active}>{name}</TrackName>
              <PencilIcon color={active ? '#459bf0' : '#696c6f'} />
            </TrackRow>
          ))}
          <ListScroll />
        </TrackList>

        <Inspector>
          <Line $height={26}>
            <Svg w={13} h={12}>
              <path d="M1 1v7M4.700 1v7M8.300 1v7M12 1v7" stroke="#d6d7d8" strokeWidth="1.800" />
              <path d="M0 7.500h13V11H0z" fill="#d6d7d8" />
            </Svg>
            <InstrumentName>Instrument</InstrumentName>
            <FlatButton>M</FlatButton>
            <FlatButton>S</FlatButton>
          </Line>
          <Line $height={36}>
            Audition Notes
            <Box $width={22}>
              <Svg w={14} h={13}>
                <path d="M1.500 7.500L5 11 12.500 1.500" stroke="#f4f4f4" strokeWidth="2" />
              </Svg>
            </Box>
          </Line>
          <Line $height={28}>
            No overlap
            <Box $width={22} />
          </Line>
          <Line $height={35}>
            Default Velocity
            <Box $width={47}>80%</Box>
          </Line>
          <Line $height={29}>
            Length
            <Box $width={22} $bg="#2565ad">
              <QIcon size={17} color="#fff" weight={2.600} />
            </Box>
          </Line>
          <Line $height={33} $pull>
            <Box $width={51}>1/16 <Caret /></Box>
            <Box $width={161} $wide $push>
              <span>Straight</span>
              <Caret />
            </Box>
            <Box $width={22} $bg="#363b43"><TinyDot /></Box>
          </Line>
          <Line $height={30}>Scale</Line>
          <Line $height={30} $pull>
            <Box $width={51} $wide>
              <span>D</span>
              <Caret />
            </Box>
            <Box $width={161} $wide $push>
              <span>Natural Minor</span>
              <Caret />
            </Box>
            <Box $width={22} />
          </Line>
          <Line $height={33}>
            Sound Variations
            <Box $width={22} $bg="#363b43">
              <Svg w={14} h={14}>
                <path d="M1.500 1.800q4-1 5 1.700c.8 2-1.500 4.500-5 3" stroke="#c3c5c7" strokeWidth="1.900" />
                <path d="M5.500 5.500l6.500 7" stroke="#c3c5c7" strokeWidth="2.300" />
              </Svg>
            </Box>
          </Line>
          <Spacer />
          <Line $height={30}>No event selected</Line>
          <Line $height={29}>
            Input Chord
            <ChordBox />
          </Line>
          <Line $height={32}>
            Current Chord
            <ChordBox />
          </Line>
        </Inspector>

        <Editor>
          <RollRow>
            <PianoKeys />
            <NoteGrid />
          </RollRow>
          <TabRow>
            <Dots>...</Dots>
            {TABS.map(([name, width], i) => (
              <Tab key={name} $width={width} $active={i === 0}>{name}</Tab>
            ))}
          </TabRow>
          <LaneRow>
            <LaneScale>
              <Svg w={104} h={70}>
                <path d="M100 8h4M101 17h3M101 26h3M98 34.500h6M101 44h3M101 52h3M101 60h3" stroke="#a7a9ab" strokeWidth="1.200" />
                <g fill="#b4b6b8" fontSize="11.500" fontFamily="Liberation Sans" textAnchor="end">
                  <text x="92.500" y="9.500">100.00</text>
                  <text x="92.500" y="38">50.00</text>
                  <text x="92.500" y="67.500">0.00</text>
                </g>
              </Svg>
            </LaneScale>
            <VelocityBars />
          </LaneRow>
          <FooterRow>
            <FooterTools>
              <Svg w={86} h={14}>
                <path d="M5 13.500l4-5 2 2 3-5 2 2 3-3" stroke="#f0f0f0" strokeWidth="1.600" />
                <path d="M36.500 4v10M31.500 9h10M56 9h10" stroke="#b8babb" strokeWidth="1.900" />
              </Svg>
            </FooterTools>
            <ScrollTrack>
              <Svg w={8} h={10}>
                <path d="M7 0v10L1 5z" fill="#5c5e61" />
              </Svg>
              <ScrollThumb />
            </ScrollTrack>
          </FooterRow>
        </Editor>
      </Body>
    </Main>
  </Window>
)

const GlobalStyle = createGlobalStyle`
  body {
    margin: 0;
    background: #1d1f20;
    overflow: hidden;
  }

  * {
    box-sizing: border-box;
  }
`

const Window = styled.div`
  width: 2400px;
  height: 1182px;
  display: flex;
  overflow: hidden;
  background: #1f2122;
  color: #c3c5c7;
  font-family: 'Liberation Sans', Arial, sans-serif;
  font-size: 13.4px;
`

const Gutter = styled.div`
  width: 7px;
  flex-shrink: 0;
  background: #1c1e20;
  border-left: 2px solid #15171a;
  box-shadow: inset 1px 0 #45484b;
`

const Main = styled.div`
  width: 2393px;
  display: flex;
  flex-direction: column;
`

const TopStrip = styled.div`
  height: 8px;
  flex-shrink: 0;
  background: #1d1f20;
`

const Toolbar = styled.div`
  height: 56px;
  flex-shrink: 0;
  display: flex;
  align-items: flex-start;
  padding: 4px 0 0 7px;
  background: #303437;
  border-bottom: 2px solid #121314;
`

const Gap = styled.div<{ $width: number }>`
  width: ${p => p.$width}px;
  flex-shrink: 0;
`

const Group = styled.div<{ $width: number }>`
  width: ${p => p.$width}px;
  height: 47px;
  flex-shrink: 0;
  display: flex;
  align-items: center;
  padding: 0 2px;
  border: 1px solid #3b3f42;
  border-top-color: #26292b;
  border-bottom-color: #4b4e51;
  border-radius: 9px;
  background: #2a2d2f;
`

const Tool = styled.div<{ $width: number; $active?: boolean }>`
  position: relative;
  width: ${p => p.$width}px;
  height: 39px;
  margin-bottom: 2px;
  flex-shrink: 0;
  display: flex;
  align-items: center;
  justify-content: center;
  border-radius: 5px;
  background: ${p => (p.$active ? '#0560cc' : 'transparent')};

  > svg {
    transform: scale(0.95);
  }
`

const Corner = styled.div<{ $active?: boolean }>`
  position: absolute;
  right: 3px;
  bottom: 3px;
  width: 8px;
  height: 8px;
  background: ${p => (p.$active ? '#c9d3e0' : '#66696b')};
  clip-path: polygon(100% 0, 100% 100%, 0 100%);
`

const Caret = styled.i`
  display: inline-block;
  flex-shrink: 0;
  border: 4.2px solid transparent;
  border-top: 6.5px solid #95979a;
  border-bottom: 0;
`

const ActionLabel = styled.div`
  width: 100%;
  display: flex;
  align-items: center;
  justify-content: center;
  gap: 5px;
  color: #d3d4d5;
`

const Field = styled.div<{ $width: number; $before: number; $drop: number }>`
  width: ${p => p.$width}px;
  margin-left: ${p => p.$before}px;
  margin-bottom: ${p => 5 - p.$drop * 2}px;
  flex-shrink: 0;
  text-align: center;
  line-height: 18.7px;
  font-size: 13px;
`

const FieldLabel = styled.div`
  white-space: nowrap;
  color: #b3b5b7;
`

const FieldValue = styled.div<{ $pull: number }>`
  position: relative;
  padding-right: ${p => p.$pull}px;
  color: #e6e7e8;
`

const FieldArrow = styled.div`
  position: absolute;
  right: 0;
  top: -1px;
`

const SmallLabel = styled.div`
  width: 31px;
  text-align: center;
  font-size: 12.5px;
  color: #c3c5c7;
`

const LengthMark = styled.div`
  margin-left: 17px;
  margin-bottom: 2px;
`

const MacroBar = styled.div`
  height: 83px;
  flex-shrink: 0;
  display: flex;
  align-items: flex-end;
  padding: 0 0 12px 12px;
  background: #1f2122;
  border-bottom: 2px solid #101112;
`

const Macros = styled.div`
  display: flex;
  gap: 14px;
  margin-left: 708px;
`

const MacroTitle = styled.div`
  height: 23px;
  padding-left: 3px;
  font-size: 14.3px;
  line-height: 23px;
  font-weight: bold;
  color: #a5a7a9;
  white-space: nowrap;
`

const ButtonRow = styled.div`
  display: flex;
  width: max-content;
  border-radius: 5px;
  overflow: hidden;
  background: #303336;
`

const MacroButton = styled.div<{ $width: number }>`
  width: ${p => p.$width}px;
  height: 35px;
  display: flex;
  align-items: center;
  justify-content: space-between;
  padding: 0 8px 0 6px;
  font-size: 13.1px;
  color: #b4b6b8;
  white-space: nowrap;

  & + & {
    border-left: 1px solid #1f2122;
  }

  > svg {
    margin: auto;
  }
`

const PresetName = styled.span`
  padding-left: 1px;
  font-size: 13.4px;
  color: #c3c5c7;
`

const MacroText = styled.span`
  flex: 1;
  text-align: center;

  &:empty {
    display: none;
  }

  &:only-child {
    margin: 0 -8px 0 -6px;
  }
`

const HeaderRow = styled.div`
  height: 37px;
  flex-shrink: 0;
  display: flex;
  align-items: center;
  background: #1f2122;

  > svg {
    flex-shrink: 0;
  }
`

const ListHeader = styled.div`
  width: 185px;
  flex-shrink: 0;
  display: flex;
  align-items: center;
  gap: 22px;
  padding: 0 0 5px 8px;
`

const TrackColor = styled.div`
  width: 15.5px;
  height: 35.5px;
  margin-bottom: 1.5px;
  background: #1fff47;
`

const TrackTitle = styled.div`
  width: 231px;
  padding-bottom: 4px;
  text-align: center;
  font-size: 14px;
  color: #d5d6d7;
`

const TitleCaret = styled.div`
  width: 88px;
  margin-left: -6px;
  padding-bottom: 4px;
`

const ArrangeIcon = styled.div`
  width: 34.5px;
  padding: 0 0 1px 7px;
`

const Body = styled.div`
  height: 998px;
  display: flex;
`

const TrackList = styled.div`
  position: relative;
  width: 184px;
  flex-shrink: 0;
  overflow: hidden;
  background: #2f3235;
`

const TrackRow = styled.div<{ $selected: boolean }>`
  height: 25.73px;
  width: 172px;
  display: flex;
  align-items: center;
  padding: 0 0 1px 16px;
  background: ${p => (p.$selected ? '#3c4145' : 'transparent')};
`

const Dot = styled.div<{ $active?: boolean }>`
  width: 7.5px;
  height: 7.5px;
  flex-shrink: 0;
  border-radius: 50%;
  background: ${p => (p.$active ? '#c9cacb' : '#56595c')};
`

const Swatch = styled.div<{ $color: string }>`
  width: 7.5px;
  height: 23.5px;
  flex-shrink: 0;
  margin: 0 16.5px 0 7px;
  background: ${p => p.$color};
`

const TrackName = styled.div<{ $active?: boolean }>`
  width: 102.5px;
  flex-shrink: 0;
  white-space: nowrap;
  letter-spacing: 0.3px;
  color: ${p => (p.$active ? '#c6c8ca' : '#686b6e')};
`

const ListScroll = styled.div`
  position: absolute;
  right: 6px;
  top: 0;
  width: 5px;
  height: 494px;
  border-radius: 3px;
  background: #505356;
`

const Inspector = styled.div`
  width: 259px;
  flex-shrink: 0;
  border-left: 1.5px solid #0c0d0e;
  padding-left: 7px;
  background: #2f3336;
`

const Line = styled.div<{ $height: number; $pull?: boolean }>`
  height: ${p => p.$height}px;
  display: flex;
  align-items: center;
  justify-content: space-between;
  padding-right: 4px;
  margin-left: ${p => (p.$pull ? -3 : 0)}px;
`

const InstrumentName = styled.div`
  flex: 1;
  padding-left: 10px;
`

const FlatButton = styled.div`
  width: 38px;
  height: 26px;
  margin-left: 1px;
  line-height: 26px;
  text-align: center;
  font-size: 14.5px;
  background: #2c2f34;

  &:last-child {
    margin-right: -4px;
  }
`

const Box = styled.div<{ $width: number; $bg?: string; $wide?: boolean; $push?: boolean }>`
  width: ${p => p.$width}px;
  height: 22px;
  display: flex;
  align-items: center;
  justify-content: center;
  gap: 5px;
  margin-left: ${p => (p.$push ? 3 : 0)}px;
  padding: 0 ${p => (p.$wide ? 4 : 0)}px;
  border: 1px solid #1f2123;
  border-radius: 3px;
  background: ${p => p.$bg || '#26282a'};

  span {
    flex: 1;
    text-align: center;
  }
`

const TinyDot = styled.div`
  width: 4px;
  height: 4px;
  border-radius: 50%;
  background: #d5d6d7;
`

const Spacer = styled.div`
  height: 44px;
`

const ChordBox = styled.div`
  width: 109px;
  height: 21px;
  border-radius: 3px;
  background: #36393b;
`

const Editor = styled.div`
  width: 1950px;
  flex-shrink: 0;
  background: #232527;
`

const RollRow = styled.div`
  display: flex;
  height: 894px;
  border-left: 1px solid #0c0d0e;
`

const TabRow = styled.div`
  height: 19.5px;
  display: flex;
  padding: 1px 0 0 105px;
  background: linear-gradient(90deg, #2d3033 104px, #232527 104px);
`

const Dots = styled.div`
  width: 23px;
  padding-left: 5px;
  line-height: 17px;
  font-weight: bold;
`

const Tab = styled.div<{ $width: number; $active?: boolean }>`
  width: ${p => p.$width}px;
  border-right: 1px solid #1f2122;
  font-size: 12.2px;
  line-height: 19px;
  text-align: center;
  white-space: nowrap;
  color: ${p => (p.$active ? '#f2f6fb' : '#a9abad')};
  background: ${p => (p.$active ? '#0560cc' : '#282a2c')};
`

const LaneRow = styled.div`
  display: flex;
  height: 70px;
`

const LaneScale = styled.div`
  width: 105px;
  border: 1px solid #0d0e0f;
  border-right: 0;
  background: #2e3134;
  overflow: hidden;
`

const FooterRow = styled.div`
  display: flex;
  height: 16px;
`

const FooterTools = styled.div`
  width: 105px;
  background: #2e3134;
`

const ScrollTrack = styled.div`
  flex: 1;
  display: flex;
  align-items: center;
  gap: 14px;
  padding: 4px 0 0 6px;
  background: #232527;
`

const ScrollThumb = styled.div`
  width: 496px;
  height: 6px;
  border-radius: 3px;
  background: #4b4d52;
`

export default App
